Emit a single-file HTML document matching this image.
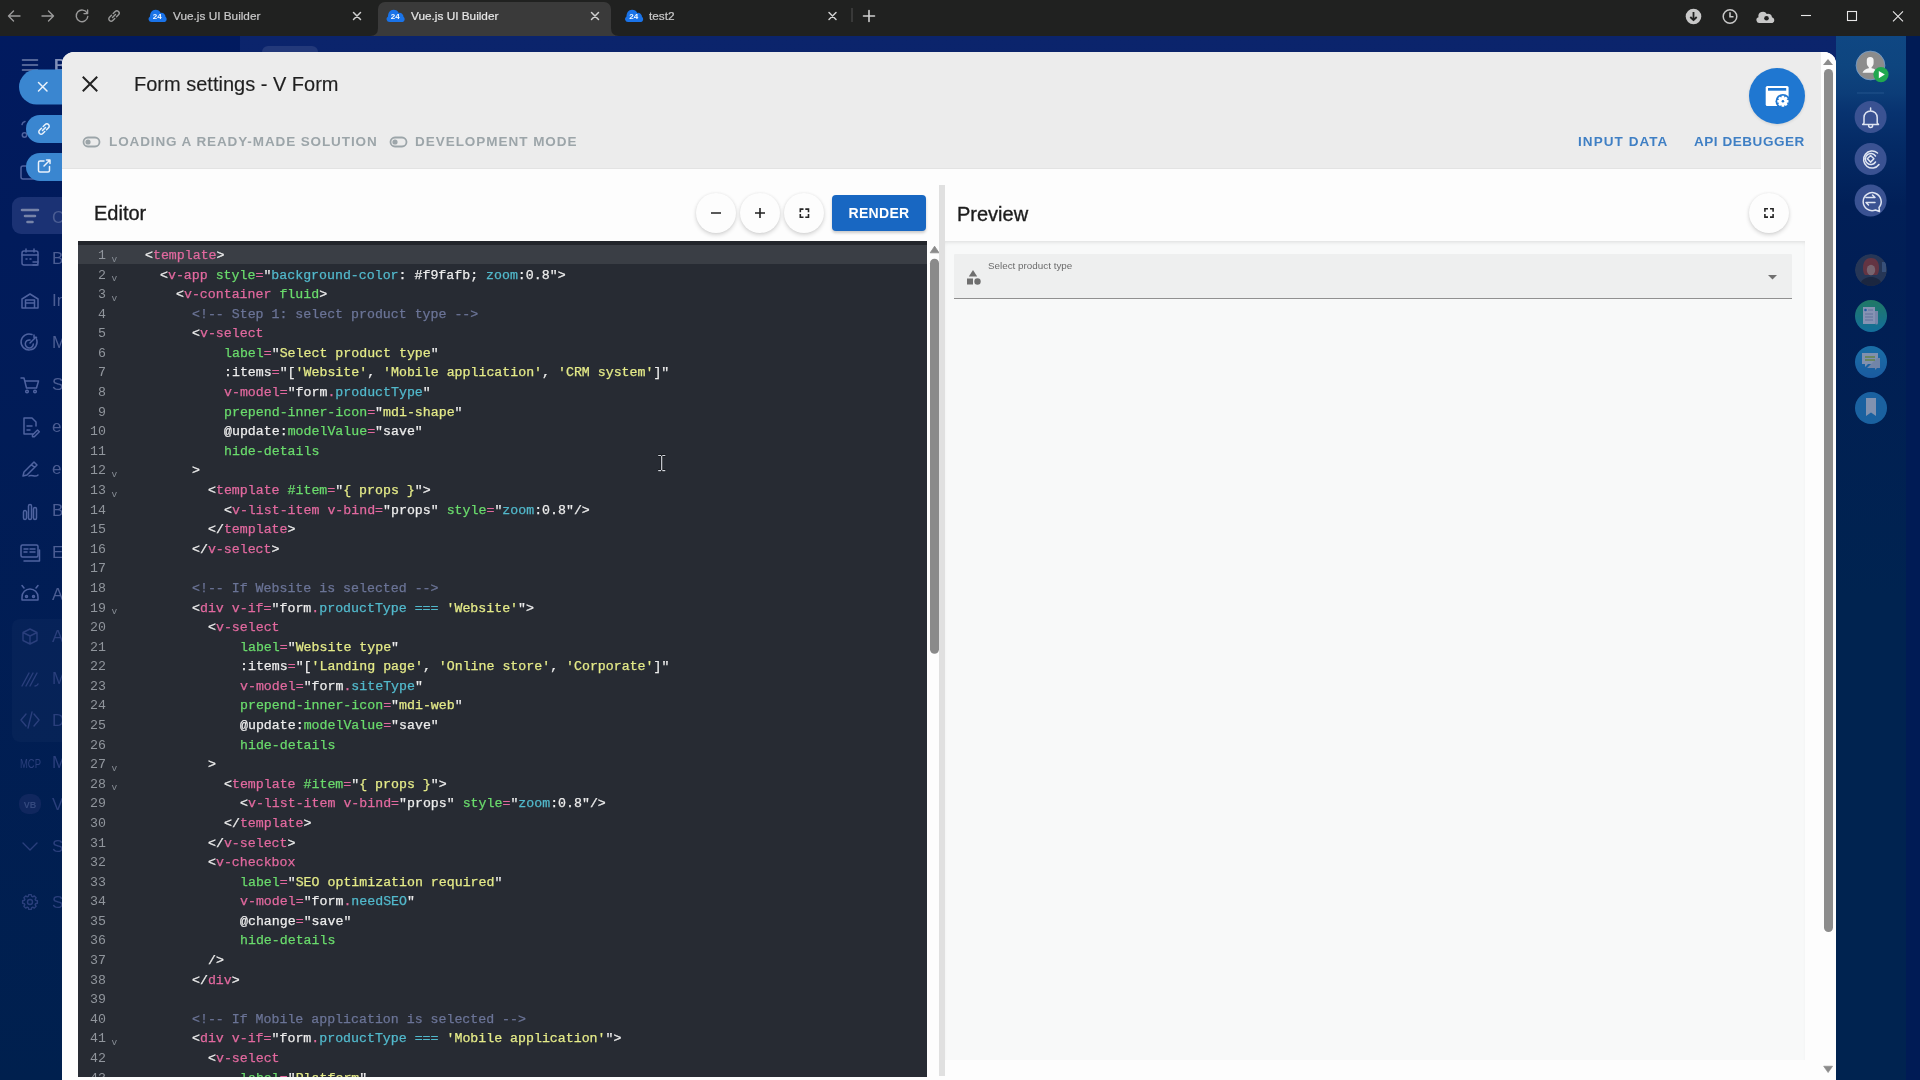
<!DOCTYPE html>
<html><head><meta charset="utf-8">
<style>
*{box-sizing:border-box;margin:0;padding:0}
html,body{width:1920px;height:1080px;overflow:hidden;background:#0b1d63;font-family:"Liberation Sans",sans-serif}
.abs{position:absolute}
svg{position:absolute;overflow:visible}
#tabbar{position:absolute;left:0;top:0;width:1920px;height:36px;background:#202120}
.tab{position:absolute;top:0;height:36px;color:#c9c9c9;font-size:12px}
.tabtxt{position:absolute;top:9.3px;line-height:14px;white-space:nowrap;-webkit-text-stroke:0.2px currentColor}
#page{position:absolute;left:0;top:36px;width:1920px;height:1044px;background:linear-gradient(180deg,#0b246c 0,#03214f 1044px)}
#dialog{position:absolute;left:62px;top:52px;width:1774px;height:1040px;background:#fdfdfd;border-radius:12px 12px 0 0;overflow:hidden}
#dhead{position:absolute;left:0;top:0;width:1774px;height:117px;background:#ececec;border-bottom:1px solid #e3e3e3}
.title{position:absolute;left:72px;top:20px;font-size:20px;line-height:24px;color:#1f1f1f;white-space:nowrap;-webkit-text-stroke:0.15px #1f1f1f}
.tog{position:absolute;top:82px;font-size:13.5px;line-height:16px;font-weight:bold;letter-spacing:1.1px;color:#9ca5a9;white-space:nowrap}
.lnk{position:absolute;top:82px;font-size:13.5px;line-height:16px;font-weight:bold;letter-spacing:1.3px;color:#3f7fc4;white-space:nowrap}
.h2{position:absolute;top:151px;font-size:20px;line-height:24px;color:#1c1c1c;font-weight:normal;white-space:nowrap;-webkit-text-stroke:0.35px #1c1c1c}
.cbtn{position:absolute;width:40px;height:40px;border-radius:50%;background:#fdfdfd;box-shadow:0 2px 4px rgba(0,0,0,.16),0 0 3px rgba(0,0,0,.06)}
#render{position:absolute;left:770px;top:143px;width:94px;height:36px;border-radius:4px;background:#1867c2;box-shadow:0 2px 3px rgba(0,0,0,.2);color:#fff;font-weight:bold;font-size:14px;letter-spacing:0.3px;text-align:center;line-height:36px}
#editor{position:absolute;left:16px;top:189px;width:849px;height:836px;will-change:transform;background:#272b33;overflow:hidden;font-family:"Liberation Mono",monospace;font-size:13.25px;line-height:19.585px}
#editor .topstrip{position:absolute;left:0;top:0;width:849px;height:3.8px;background:#22252b}
.ln{position:absolute;left:0;height:19.585px;width:849px;white-space:pre}
.ln.hl{background:#3a3e45}
.num{position:absolute;top:1.2px;right:821px;color:#90959c;text-align:right}
.fold{position:absolute;left:33.5px;top:4.8px;color:#858b93;font-size:9.5px}
.code{position:absolute;top:1.2px;left:67px;color:#ededed;-webkit-text-stroke:0.25px currentColor}
.t{color:#e2699f}.a{color:#6adb6c}.s{color:#e4ea88}.p{color:#52b9cc}.c{color:#6b7497}.w{color:#ededed}

#root{position:absolute;left:0;top:0;width:1920px;height:1080px;overflow:hidden;will-change:transform}

</style></head><body>
<div id="root">
<div id="tabbar">
  <svg width="1920" height="36" style="left:0;top:0">
    <g stroke="#9a9a9a" stroke-width="1.4" fill="none" stroke-linecap="round" stroke-linejoin="round">
      <path d="M20 16H8.5M13.5 11L8.5 16L13.5 21"/>
      <path d="M42 16H53.5M48.5 11L53.5 16L48.5 21"/>
      <path d="M87.2 13.2A5.8 5.8 0 1 0 87.8 16.5"/><path d="M87.6 10v3.6h-3.6"/>
      <path d="M112.5 17.5l3-3"/><path d="M111.5 15.2l-2 2a2.3 2.3 0 0 0 3.3 3.3l2-2"/><path d="M116.5 16.8l2-2a2.3 2.3 0 0 0-3.3-3.3l-2 2"/>
    </g>
  </svg>
  <div class="abs" style="left:378px;top:2px;width:233px;height:34px;background:#3a3a3a;border-radius:7px 7px 0 0"></div>
  <svg width="1920" height="36" style="left:0;top:0">
    <path d="M370 36 Q378 36 378 28 V36Z M611 28 Q611 36 619 36 H611Z" fill="#3a3a3a"/>
    <g id="fav">
      <path d="M151.5 22a3 3 0 0 1-1.5-5.6c0-3.2 2-6.6 5.5-6.6c2.6 0 4.2 1.2 5.2 3.2a3.8 3.8 0 0 1 4.8 3.8a3 3 0 0 1-0.8 5.2z" fill="#1a73e8"/>
      <text x="157.2" y="19.3" font-family="Liberation Sans" font-size="8" font-weight="bold" fill="#f4faff" text-anchor="middle">24</text>
    </g>
    <use href="#fav" x="238"/>
    <use href="#fav" x="476.5"/>
    <g stroke="#d0d0d0" stroke-width="1.5" stroke-linecap="round">
      <path d="M353.5 12.5l7 7M360.5 12.5l-7 7"/>
      <path d="M591.5 12.5l7 7M598.5 12.5l-7 7"/>
      <path d="M829 12.5l7 7M836 12.5l-7 7"/>
      <path d="M869 10.5v11M863.5 16h11" stroke-width="1.6"/>
    </g>
    <path d="M852 8v14" stroke="#4a4a4a" stroke-width="1.2"/>
    <circle cx="1693.5" cy="16.5" r="7.8" fill="#c8c8c8"/>
    <path d="M1693.5 12v8M1690.3 17l3.2 3.2 3.2-3.2" stroke="#202120" stroke-width="1.8" fill="none" stroke-linejoin="round"/>
    <circle cx="1730" cy="16.5" r="6.8" stroke="#c8c8c8" stroke-width="1.5" fill="none"/>
    <path d="M1730 12.3v4.5h3.5" stroke="#c8c8c8" stroke-width="1.6" fill="none"/>
    <path d="M1760 23a3 3 0 0 1-1.5-5.8a4.5 4.5 0 0 1 8.3-3.2a3.8 3.8 0 0 1 5.2 3.3a3 3 0 0 1 0.5 5.7z" fill="#c8c8c8"/>
    <circle cx="1766.5" cy="18.2" r="2.3" fill="#202120"/>
    <g stroke="#e8e8e8" stroke-width="1.1" fill="none">
      <path d="M1801 15.5h10"/>
      <rect x="1847.5" y="11.5" width="9" height="9"/>
      <path d="M1893 11.3l10 10M1903 11.3l-10 10"/>
    </g>
  </svg>
  <div class="tabtxt" style="left:173px;color:#c9c9c9;font-size:11.8px">Vue.js UI Builder</div>
  <div class="tabtxt" style="left:411px;color:#e6e6e6;font-size:11.8px">Vue.js UI Builder</div>
  <div class="tabtxt" style="left:649px;color:#c9c9c9;font-size:11.8px">test2</div>
</div>
<div id="page">
  <div class="abs" style="left:262px;top:10px;width:56px;height:8px;border-radius:6px 6px 0 0;background:#23397a"></div>
  <div class="abs" style="left:0;top:0;width:240px;height:1044px;background:linear-gradient(180deg,#011a5f 0,#011c57 400px,#00204e 1044px)"></div>
  <!-- right sidebar -->
  <div class="abs" style="left:1836px;top:0;width:70px;height:1044px;background:linear-gradient(180deg,#0f4783 0px,#0e457f 30px,#0c3d78 57px,#083370 75px,#042a65 110px,#011f57 170px,#011e55 230px,#002350 560px,#002350 1044px)"></div>
  <div class="abs" style="left:1906px;top:0;width:14px;height:1044px;background:#001b55"></div>
</div>
<!-- left sidebar content (on page coords) -->
<svg width="64" height="1080" style="left:0;top:0">
  <g stroke="#6f7fab" stroke-width="1.6" fill="none" stroke-linecap="round">
    <path d="M22.5 60h15M22.5 65h15M22.5 70h15"/>
  </g>
  <text x="54" y="71" font-family="Liberation Sans" font-size="17" font-weight="bold" fill="#8290b8">B</text>
  <rect x="12" y="197" width="60" height="37" rx="9" fill="#1b3274"/>
  <g stroke="#7784a8" stroke-width="2.6" stroke-linecap="round"><path d="M22 210h16M25 216h10M27.5 222h5"/></g>
  <text x="52" y="223" font-family="Liberation Sans" font-size="17" fill="#4b5d93">C</text>
  <g stroke="#4f63a0" stroke-width="1.5" fill="none" stroke-linecap="round" stroke-linejoin="round">
    <path d="M22 124.5a4 4 0 0 1 3-3" /><circle cx="24.5" cy="135" r="2.2"/>
    <rect x="21" y="166" width="14" height="13" rx="2"/>
    <!-- calendar -->
    <rect x="22" y="251" width="16" height="14" rx="2"/><path d="M26 249v3M34 249v3M22 255h16M26 259h1M30 259h1M33 262h5M33 265h5"/>
    <!-- building -->
    <path d="M22 308v-9l8-5 8 5v9zM25.5 308v-8h9v8M25.5 303h9"/>
    <!-- target -->
    <path d="M36.5 339a8 8 0 1 1-4.5-4.5M33.3 344a4 4 0 1 1-3.3-4M30 343l6-6M34 335v2.5h2.5"/>
    <!-- cart -->
    <path d="M21 378h3l2.5 10h10l2-7h-13"/><circle cx="27" cy="391.5" r="1.3"/><circle cx="35" cy="391.5" r="1.3"/>
    <!-- doc -->
    <path d="M33 434h-9v-16h8l4 4v4M27 426h5M27 430h3M32.5 435l5-5 1.8 1.8-5 5h-1.8z"/>
    <!-- pen -->
    <path d="M23 476l1-4 10-10 3 3-10 10zM31.5 464.5l3 3M29 476c3-2 6 2 9-1"/>
    <!-- chart -->
    <path d="M23.5 518v-6a1.5 1.5 0 0 1 3 0v6a1.5 1.5 0 0 1-3 0zM28.5 518v-12a1.5 1.5 0 0 1 3 0v12a1.5 1.5 0 0 1-3 0zM33.5 518v-9a1.5 1.5 0 0 1 3 0v9a1.5 1.5 0 0 1-3 0z"/>
    <!-- card -->
    <rect x="21" y="545" width="17" height="12" rx="1.5"/><path d="M24 561h15.5v-11M24 549h4M24 552h3M30 549h5M30 552h5"/>
    <!-- android -->
    <path d="M22 600v-3a8 8 0 0 1 16 0v3zM24 588l-2-2.5M36 588l2-2.5"/><circle cx="26.5" cy="596.5" r="1"/><circle cx="33.5" cy="596.5" r="1"/>
  </g>
  <rect x="12" y="619" width="60" height="123" rx="8" fill="#ffffff" opacity=".025"/>
  <g stroke="#2a3f7c" stroke-width="1.4" fill="none" stroke-linecap="round" stroke-linejoin="round">
    <path d="M30 629l7 3.5v8l-7 3.5-7-3.5v-8zM23 632.5l7 3.5 7-3.5M30 636v8"/>
    <path d="M22 686l7-13M26 686l7-13M30 686l7-13M35 686q2 0 3-2"/>
    <path d="M26 714l-5 6 5 6M34 714l5 6-5 6M32 712l-4 16"/>
    <circle cx="30" cy="847" r="0"/><path d="M23 843l7 7 7-7"/>
    <circle cx="30" cy="902" r="2.5"/><path d="M37.39 900.73 L37.39 903.27 L35.54 903.71 L35.13 904.71 L36.12 906.33 L34.33 908.12 L32.71 907.13 L31.71 907.54 L31.27 909.39 L28.73 909.39 L28.29 907.54 L27.29 907.13 L25.67 908.12 L23.88 906.33 L24.87 904.71 L24.46 903.71 L22.61 903.27 L22.61 900.73 L24.46 900.29 L24.87 899.29 L23.88 897.67 L25.67 895.88 L27.29 896.87 L28.29 896.46 L28.73 894.61 L31.27 894.61 L31.71 896.46 L32.71 896.87 L34.33 895.88 L36.12 897.67 L35.13 899.29 L35.54 900.29Z"/>
  </g>
  <text x="20" y="768" font-family="Liberation Sans" font-size="12" fill="#2a3f7c" textLength="21" lengthAdjust="spacingAndGlyphs">MCP</text>
  <rect x="19" y="794" width="22" height="20" rx="9" fill="#10275e"/>
  <text x="30" y="808" font-family="Liberation Sans" font-size="9" font-weight="bold" fill="#34497e" text-anchor="middle">VB</text>
  <g font-family="Liberation Sans" font-size="17" fill="#4b5d93">
    <text x="52" y="264">B</text><text x="52" y="306">In</text><text x="52" y="348">M</text><text x="52" y="390">Si</text>
    <text x="52" y="432">e-</text><text x="52" y="474">e-</text><text x="52" y="516">Bl</text><text x="52" y="558">Er</text><text x="52" y="600">A</text>
  </g>
  <g font-family="Liberation Sans" font-size="17" fill="#2a3f7c">
    <text x="52" y="642">A</text><text x="52" y="684">M</text><text x="52" y="726">D</text><text x="52" y="768">M</text><text x="52" y="810">V</text><text x="52" y="852">S</text><text x="52" y="908">S</text>
  </g>
  <!-- pills -->
  <rect x="19" y="69.5" width="60" height="35" rx="17.5" fill="#3a86d0"/>
  <rect x="26" y="115" width="60" height="28" rx="14" fill="#3a86d0"/>
  <rect x="26" y="153" width="60" height="28" rx="14" fill="#3a86d0"/>
  <g stroke="#eaf2fb" stroke-width="1.5" fill="none" stroke-linecap="round" stroke-linejoin="round">
    <path d="M38.5 82.5l8.5 8.5M47 82.5l-8.5 8.5"/>
    <path d="M42.5 130.5l3-3"/><path d="M41.5 128.2l-2 2a2.3 2.3 0 0 0 3.3 3.3l2-2"/><path d="M46.5 129.8l2-2a2.3 2.3 0 0 0-3.3-3.3l-2 2"/>
    <path d="M44 161h-4a1.5 1.5 0 0 0-1.5 1.5v8a1.5 1.5 0 0 0 1.5 1.5h8a1.5 1.5 0 0 0 1.5-1.5v-4M44 166l6-6M46.5 160h3.5v3.5"/>
  </g>
</svg>

<!-- right sidebar content -->
<svg width="84" height="1080" style="left:1836px;top:0">
  <circle cx="34.5" cy="65.5" r="14.4" fill="#8c8c8c" stroke="#6d9ccf" stroke-width="0.8"/>
  <path d="M34.2 57a3.4 3.4 0 0 1 3.4 3.6v2.4c0 2-1 3.4-2 4v1.2c3 .5 5.5 1.8 6.5 4.5h-15.6c1-2.7 3.5-4 6.3-4.5v-1.2c-1-.6-2-2-2-4v-2.4a3.4 3.4 0 0 1 3.4-3.6z" fill="#f4f4f4"/>
  <circle cx="45" cy="74.6" r="7.6" fill="#20a84f"/>
  <path d="M42.8 71v7.2l6-3.6z" fill="#fff"/>
  <path d="M21 93h27" stroke="#3a6aa0" stroke-width="1" opacity=".5"/>
  <g fill="#3a5292"><circle cx="34.6" cy="117" r="16"/><circle cx="34.6" cy="159" r="16"/><circle cx="34.6" cy="200.5" r="16"/></g>
  <g stroke="#dfe5f2" stroke-width="1.5" fill="none" stroke-linecap="round" stroke-linejoin="round">
    <path d="M28 123v-5.5a6.6 6.6 0 0 1 13.2 0V123l1.3 1.5h-15.8zM32.6 125.5a2 2 0 0 0 4 0M34.6 108v2"/>
    <path d="M41.5 153a8.5 8.5 0 1 0 1.5 11.5M39.5 156a5.5 5.5 0 1 0 0 6" /><path d="M34.6 155.5l3.3 3.3-3.3 3.3-3.3-3.3z"/>
    <path d="M43 207.5a9 9 0 1 0-3.5 2.5l4 1.5zM30 197.5h9M36.5 195l2.5 2.5M39 202.5h-9M32.5 205l-2.5-2.5"/>
  </g>
  <g opacity=".62">
    <defs><linearGradient id="gn" x1="0" y1="0" x2="0" y2="1"><stop offset="0" stop-color="#34b070"/><stop offset="1" stop-color="#1f9ec8"/></linearGradient>
    <linearGradient id="gc" x1="0" y1="0" x2="0" y2="1"><stop offset="0" stop-color="#2aa0d8"/><stop offset="1" stop-color="#2a7fd0"/></linearGradient></defs>
    <clipPath id="avc"><circle cx="35" cy="270" r="16"/></clipPath><g clip-path="url(#avc)"><circle cx="35" cy="270" r="16" fill="#3e4658"/>
    <path d="M27 268c0-7 3.5-10 8-10s8 3 8 10c0 4-1 6-2 7h-12c-1-1-2-3-2-7z" fill="#a04238"/>
    <ellipse cx="35" cy="270" rx="4.2" ry="5.2" fill="#c09080"/>
    <path d="M24 284c2-5 6-7 11-7s9 2 11 7a16 16 0 0 1-22 0z" fill="#2c2c34"/>
    <path d="M46 262h4v10h-4z" fill="#5a7090"/></g>
    <circle cx="35" cy="316" r="16" fill="url(#gn)"/>
    <circle cx="35" cy="362" r="16" fill="url(#gc)"/>
    <circle cx="35" cy="408" r="16" fill="#2a8ad0"/>
    <path d="M27 307h12v17h-12z" fill="#d8dbee"/><path d="M39 311h3v12a1.5 1.5 0 0 1-3 0z" fill="#c0c6e0"/>
    <circle cx="29.5" cy="310" r="1.3" fill="#3a7fd0"/><path d="M32 310h5M29 314h8M29 317h8M29 320h8" stroke="#9aa4c8" stroke-width="1"/>
    <path d="M26 353h16v11h-10l-3 3v-3h-3z" fill="#d0d6e6"/><path d="M41 358h3v10h-3l-2 2v-2h-8" fill="#b8c4dc"/>
    <path d="M29 357h10M29 360h10" stroke="#a0c040" stroke-width="1.6"/>
    <path d="M30 398h10v18l-5-3.5-5 3.5z" fill="#d0d8ea"/>
  </g>
</svg>
<div id="dialog">
  <div id="dhead">
    <svg width="40" height="40" style="left:8px;top:12px">
      <path d="M13.5 13.5l13 13M26.5 13.5l-13 13" stroke="#222" stroke-width="2" stroke-linecap="square"/>
    </svg>
    <div class="title">Form settings - V Form</div>
    <svg width="600" height="30" style="left:0;top:74px">
      <g stroke="#9ca5a9" stroke-width="1.8" fill="none"><rect x="21.5" y="11.5" width="16" height="9" rx="4.5"/><rect x="328.5" y="11.5" width="16" height="9" rx="4.5"/></g>
      <g fill="#9ca5a9"><circle cx="26" cy="16" r="2.6"/><circle cx="333" cy="16" r="2.6"/></g>
    </svg>
    <div class="tog" style="left:47px;letter-spacing:0.89px">LOADING A READY-MADE SOLUTION</div>
    <div class="tog" style="left:353px;letter-spacing:0.97px">DEVELOPMENT MODE</div>
    <div class="lnk" style="left:1516px;letter-spacing:1.07px">INPUT DATA</div>
    <div class="lnk" style="left:1632px;letter-spacing:0.55px">API DEBUGGER</div>
    <div class="abs" style="left:1687px;top:16px;width:56px;height:56px;border-radius:50%;background:#1f77d1;box-shadow:0 1px 3px rgba(0,0,0,.12)"></div>
    <svg width="56" height="56" style="left:1687px;top:16px">
      <rect x="16.7" y="17.9" width="22.9" height="20.2" rx="1.6" fill="#fff"/>
      <rect x="19" y="20" width="18.2" height="2.7" fill="#1f77d1"/>
      <circle cx="33.9" cy="33.3" r="7.4" fill="#1f77d1"/>
      <path d="M32.66 27.74 L35.14 27.74 L35.38 29.37 L35.63 29.47 L36.95 28.49 L38.71 30.25 L37.73 31.57 L37.83 31.82 L39.46 32.06 L39.46 34.54 L37.83 34.78 L37.73 35.03 L38.71 36.35 L36.95 38.11 L35.63 37.13 L35.38 37.23 L35.14 38.86 L32.66 38.86 L32.42 37.23 L32.17 37.13 L30.85 38.11 L29.09 36.35 L30.07 35.03 L29.97 34.78 L28.34 34.54 L28.34 32.06 L29.97 31.82 L30.07 31.57 L29.09 30.25 L30.85 28.49 L32.17 29.47 L32.42 29.37Z" fill="#fff"/>
      <circle cx="33.9" cy="33.3" r="1.3" fill="#1f77d1"/>
    </svg>
  </div>
  <div class="h2" style="left:32px;top:148.5px">Editor</div>
  <div class="cbtn" style="left:634px;top:141px"></div>
  <div class="cbtn" style="left:678px;top:141px"></div>
  <div class="cbtn" style="left:722px;top:141px"></div>
  <svg width="140" height="40" style="left:634px;top:141px">
    <g stroke="#222" stroke-width="1.6" fill="none">
      <path d="M15 20h10"/><path d="M59 20h10M64 15v10"/>
      <path d="M104.3 19.3V16.1H107.5M109.3 16.1H112.5V19.3M112.5 21V24.2H109.3M107.5 24.2H104.3V21" stroke-width="1.6" stroke="#262626"/>
    </g>
  </svg>
  <div id="render">RENDER</div>
  <div id="editor"><div class="topstrip"></div>
<div class="ln hl" style="top:3.80px"><span class="num">1</span><span class="fold">v</span><span class="code" style="left:67px"><span class="w">&lt;</span><span class="t">template</span><span class="w">&gt;</span></span></div>
<div class="ln" style="top:23.39px"><span class="num">2</span><span class="fold">v</span><span class="code" style="left:82px"><span class="w">&lt;</span><span class="t">v-app</span><span class="w"> </span><span class="a">style</span><span class="t">=</span><span class="w">"</span><span class="p">background-color</span><span class="w">: #f9fafb; </span><span class="p">zoom</span><span class="w">:0.8"</span><span class="w">&gt;</span></span></div>
<div class="ln" style="top:42.97px"><span class="num">3</span><span class="fold">v</span><span class="code" style="left:98px"><span class="w">&lt;</span><span class="t">v-container</span><span class="w"> </span><span class="a">fluid</span><span class="w">&gt;</span></span></div>
<div class="ln" style="top:62.55px"><span class="num">4</span><span class="code" style="left:114px"><span class="c">&lt;!-- Step 1: select product type --&gt;</span></span></div>
<div class="ln" style="top:82.14px"><span class="num">5</span><span class="code" style="left:114px"><span class="w">&lt;</span><span class="t">v-select</span></span></div>
<div class="ln" style="top:101.73px"><span class="num">6</span><span class="code" style="left:146px"><span class="a">label</span><span class="t">=</span><span class="w">"</span><span class="s">Select product type</span><span class="w">"</span></span></div>
<div class="ln" style="top:121.31px"><span class="num">7</span><span class="code" style="left:146px"><span class="w">:items</span><span class="t">=</span><span class="w">"[</span><span class="s">'Website'</span><span class="w">, </span><span class="s">'Mobile application'</span><span class="w">, </span><span class="s">'CRM system'</span><span class="w">]"</span></span></div>
<div class="ln" style="top:140.90px"><span class="num">8</span><span class="code" style="left:146px"><span class="t">v-model</span><span class="t">=</span><span class="w">"form</span><span class="t">.</span><span class="p">productType</span><span class="w">"</span></span></div>
<div class="ln" style="top:160.48px"><span class="num">9</span><span class="code" style="left:146px"><span class="a">prepend-inner-icon</span><span class="t">=</span><span class="w">"</span><span class="s">mdi-shape</span><span class="w">"</span></span></div>
<div class="ln" style="top:180.07px"><span class="num">10</span><span class="code" style="left:146px"><span class="w">@update:</span><span class="a">modelValue</span><span class="t">=</span><span class="w">"save"</span></span></div>
<div class="ln" style="top:199.65px"><span class="num">11</span><span class="code" style="left:146px"><span class="a">hide-details</span></span></div>
<div class="ln" style="top:219.24px"><span class="num">12</span><span class="fold">v</span><span class="code" style="left:114px"><span class="w">&gt;</span></span></div>
<div class="ln" style="top:238.82px"><span class="num">13</span><span class="fold">v</span><span class="code" style="left:130px"><span class="w">&lt;</span><span class="t">template</span><span class="w"> </span><span class="a">#item</span><span class="t">=</span><span class="w">"</span><span class="s">{ props }</span><span class="w">"&gt;</span></span></div>
<div class="ln" style="top:258.41px"><span class="num">14</span><span class="code" style="left:146px"><span class="w">&lt;</span><span class="t">v-list-item</span><span class="w"> </span><span class="t">v-bind</span><span class="t">=</span><span class="w">"props" </span><span class="a">style</span><span class="t">=</span><span class="w">"</span><span class="p">zoom</span><span class="w">:0.8"/&gt;</span></span></div>
<div class="ln" style="top:277.99px"><span class="num">15</span><span class="code" style="left:130px"><span class="w">&lt;/</span><span class="t">template</span><span class="w">&gt;</span></span></div>
<div class="ln" style="top:297.58px"><span class="num">16</span><span class="code" style="left:114px"><span class="w">&lt;/</span><span class="t">v-select</span><span class="w">&gt;</span></span></div>
<div class="ln" style="top:317.16px"><span class="num">17</span><span class="code" style="left:67px"></span></div>
<div class="ln" style="top:336.75px"><span class="num">18</span><span class="code" style="left:114px"><span class="c">&lt;!-- If Website is selected --&gt;</span></span></div>
<div class="ln" style="top:356.33px"><span class="num">19</span><span class="fold">v</span><span class="code" style="left:114px"><span class="w">&lt;</span><span class="t">div</span><span class="w"> </span><span class="t">v-if</span><span class="t">=</span><span class="w">"form</span><span class="t">.</span><span class="p">productType</span><span class="w"> </span><span class="p">===</span><span class="w"> </span><span class="s">'Website'</span><span class="w">"&gt;</span></span></div>
<div class="ln" style="top:375.92px"><span class="num">20</span><span class="code" style="left:130px"><span class="w">&lt;</span><span class="t">v-select</span></span></div>
<div class="ln" style="top:395.50px"><span class="num">21</span><span class="code" style="left:162px"><span class="a">label</span><span class="t">=</span><span class="w">"</span><span class="s">Website type</span><span class="w">"</span></span></div>
<div class="ln" style="top:415.09px"><span class="num">22</span><span class="code" style="left:162px"><span class="w">:items</span><span class="t">=</span><span class="w">"[</span><span class="s">'Landing page'</span><span class="w">, </span><span class="s">'Online store'</span><span class="w">, </span><span class="s">'Corporate'</span><span class="w">]"</span></span></div>
<div class="ln" style="top:434.67px"><span class="num">23</span><span class="code" style="left:162px"><span class="t">v-model</span><span class="t">=</span><span class="w">"form</span><span class="t">.</span><span class="p">siteType</span><span class="w">"</span></span></div>
<div class="ln" style="top:454.26px"><span class="num">24</span><span class="code" style="left:162px"><span class="a">prepend-inner-icon</span><span class="t">=</span><span class="w">"</span><span class="s">mdi-web</span><span class="w">"</span></span></div>
<div class="ln" style="top:473.84px"><span class="num">25</span><span class="code" style="left:162px"><span class="w">@update:</span><span class="a">modelValue</span><span class="t">=</span><span class="w">"save"</span></span></div>
<div class="ln" style="top:493.43px"><span class="num">26</span><span class="code" style="left:162px"><span class="a">hide-details</span></span></div>
<div class="ln" style="top:513.01px"><span class="num">27</span><span class="fold">v</span><span class="code" style="left:130px"><span class="w">&gt;</span></span></div>
<div class="ln" style="top:532.60px"><span class="num">28</span><span class="fold">v</span><span class="code" style="left:146px"><span class="w">&lt;</span><span class="t">template</span><span class="w"> </span><span class="a">#item</span><span class="t">=</span><span class="w">"</span><span class="s">{ props }</span><span class="w">"&gt;</span></span></div>
<div class="ln" style="top:552.18px"><span class="num">29</span><span class="code" style="left:162px"><span class="w">&lt;</span><span class="t">v-list-item</span><span class="w"> </span><span class="t">v-bind</span><span class="t">=</span><span class="w">"props" </span><span class="a">style</span><span class="t">=</span><span class="w">"</span><span class="p">zoom</span><span class="w">:0.8"/&gt;</span></span></div>
<div class="ln" style="top:571.76px"><span class="num">30</span><span class="code" style="left:146px"><span class="w">&lt;/</span><span class="t">template</span><span class="w">&gt;</span></span></div>
<div class="ln" style="top:591.35px"><span class="num">31</span><span class="code" style="left:130px"><span class="w">&lt;/</span><span class="t">v-select</span><span class="w">&gt;</span></span></div>
<div class="ln" style="top:610.93px"><span class="num">32</span><span class="code" style="left:130px"><span class="w">&lt;</span><span class="t">v-checkbox</span></span></div>
<div class="ln" style="top:630.52px"><span class="num">33</span><span class="code" style="left:162px"><span class="a">label</span><span class="t">=</span><span class="w">"</span><span class="s">SEO optimization required</span><span class="w">"</span></span></div>
<div class="ln" style="top:650.11px"><span class="num">34</span><span class="code" style="left:162px"><span class="t">v-model</span><span class="t">=</span><span class="w">"form</span><span class="t">.</span><span class="p">needSEO</span><span class="w">"</span></span></div>
<div class="ln" style="top:669.69px"><span class="num">35</span><span class="code" style="left:162px"><span class="w">@change</span><span class="t">=</span><span class="w">"save"</span></span></div>
<div class="ln" style="top:689.27px"><span class="num">36</span><span class="code" style="left:162px"><span class="a">hide-details</span></span></div>
<div class="ln" style="top:708.86px"><span class="num">37</span><span class="code" style="left:130px"><span class="w">/&gt;</span></span></div>
<div class="ln" style="top:728.44px"><span class="num">38</span><span class="code" style="left:114px"><span class="w">&lt;/</span><span class="t">div</span><span class="w">&gt;</span></span></div>
<div class="ln" style="top:748.03px"><span class="num">39</span><span class="code" style="left:67px"></span></div>
<div class="ln" style="top:767.62px"><span class="num">40</span><span class="code" style="left:114px"><span class="c">&lt;!-- If Mobile application is selected --&gt;</span></span></div>
<div class="ln" style="top:787.20px"><span class="num">41</span><span class="fold">v</span><span class="code" style="left:114px"><span class="w">&lt;</span><span class="t">div</span><span class="w"> </span><span class="t">v-if</span><span class="t">=</span><span class="w">"form</span><span class="t">.</span><span class="p">productType</span><span class="w"> </span><span class="p">===</span><span class="w"> </span><span class="s">'Mobile application'</span><span class="w">"&gt;</span></span></div>
<div class="ln" style="top:806.78px"><span class="num">42</span><span class="code" style="left:130px"><span class="w">&lt;</span><span class="t">v-select</span></span></div>
<div class="ln" style="top:826.37px"><span class="num">43</span><span class="code" style="left:162px"><span class="a">label</span><span class="t">=</span><span class="w">"</span><span class="s">Platform</span><span class="w">"</span></span></div>
  </div>
  <!-- editor scrollbar -->
  <svg width="14" height="840" style="left:866px;top:189px">
    <path d="M2.2 11.8L6.6 5.2L11 11.8z" fill="#8a8a8a" stroke="#8a8a8a" stroke-width="0.8" stroke-linejoin="round"/>
    <rect x="2" y="17.8" width="9" height="395" rx="4.5" fill="#8a8a8a"/>
  </svg>
  <div class="abs" style="left:877px;top:133px;width:6px;height:891px;background:#e0e0e0"></div>
  <div class="h2" style="left:895px;top:150px">Preview</div>
  <div class="cbtn" style="left:1687px;top:141px"></div>
  <svg width="40" height="40" style="left:1686px;top:142px">
    <path d="M16.9 17.8V14.7H20M22 14.7H25.1V17.8M25.1 19.9V23.1H22M20 23.1H16.9V19.9" stroke="#262626" stroke-width="1.6" fill="none"/>
  </svg>
  <!-- preview area -->
  <div class="abs" style="left:883px;top:189px;width:860px;height:818.5px;background:#f8f9f9;box-shadow:inset 0 3px 4px -2px rgba(0,0,0,.12)"></div>
  <div class="abs" style="left:892px;top:202px;width:838px;height:44.5px;background:#eeefef;border-bottom:1.5px solid #909090;border-radius:1px 1px 0 0"></div>
  <div class="abs" style="left:926px;top:207.8px;font-size:9.85px;line-height:12px;color:#6c6c6c;white-space:nowrap">Select product type</div>
  <svg width="30" height="30" style="left:898px;top:210.6px">
    <path d="M13 7l4.2 6.5h-8.4z" fill="#6f6f6f"/><rect x="7" y="15.5" width="6" height="6" fill="#6f6f6f"/><circle cx="17.5" cy="18.5" r="3.2" fill="#6f6f6f"/>
  </svg>
  <svg width="20" height="20" style="left:1701px;top:216px"><path d="M5 7h9l-4.5 4.5z" fill="#707070"/></svg>
  <!-- dialog scrollbar -->
  <div class="abs" style="left:1759px;top:0;width:15px;height:1040px;background:#fdfdfd"></div>
  <svg width="14" height="1030" style="left:1758px;top:0">
    <path d="M3 13l5-6 5 6z" fill="#8c8c8c"/>
    <rect x="4" y="17" width="9" height="863" rx="4.5" fill="#8c8c8c"/>
    <path d="M3.6 1014.2h9l-4.5 6.4z" fill="#8a8a8a" stroke="#8a8a8a" stroke-width="0.6" stroke-linejoin="round"/>
  </svg>
</div>

<svg width="20" height="30" style="left:650px;top:448px">
  <g stroke="#15171b" stroke-width="2.6" fill="none"><path d="M8 7.5h7.5M8 22.5h7.5M11.7 7.5v15"/></g>
  <g stroke="#d3d7de" stroke-width="1.2" fill="none"><path d="M8.2 7.5h3M12.3 7.5h3M8.2 22.6h3M12.3 22.6h3M11.7 8v14"/></g>
</svg>

</div>
</body></html>
